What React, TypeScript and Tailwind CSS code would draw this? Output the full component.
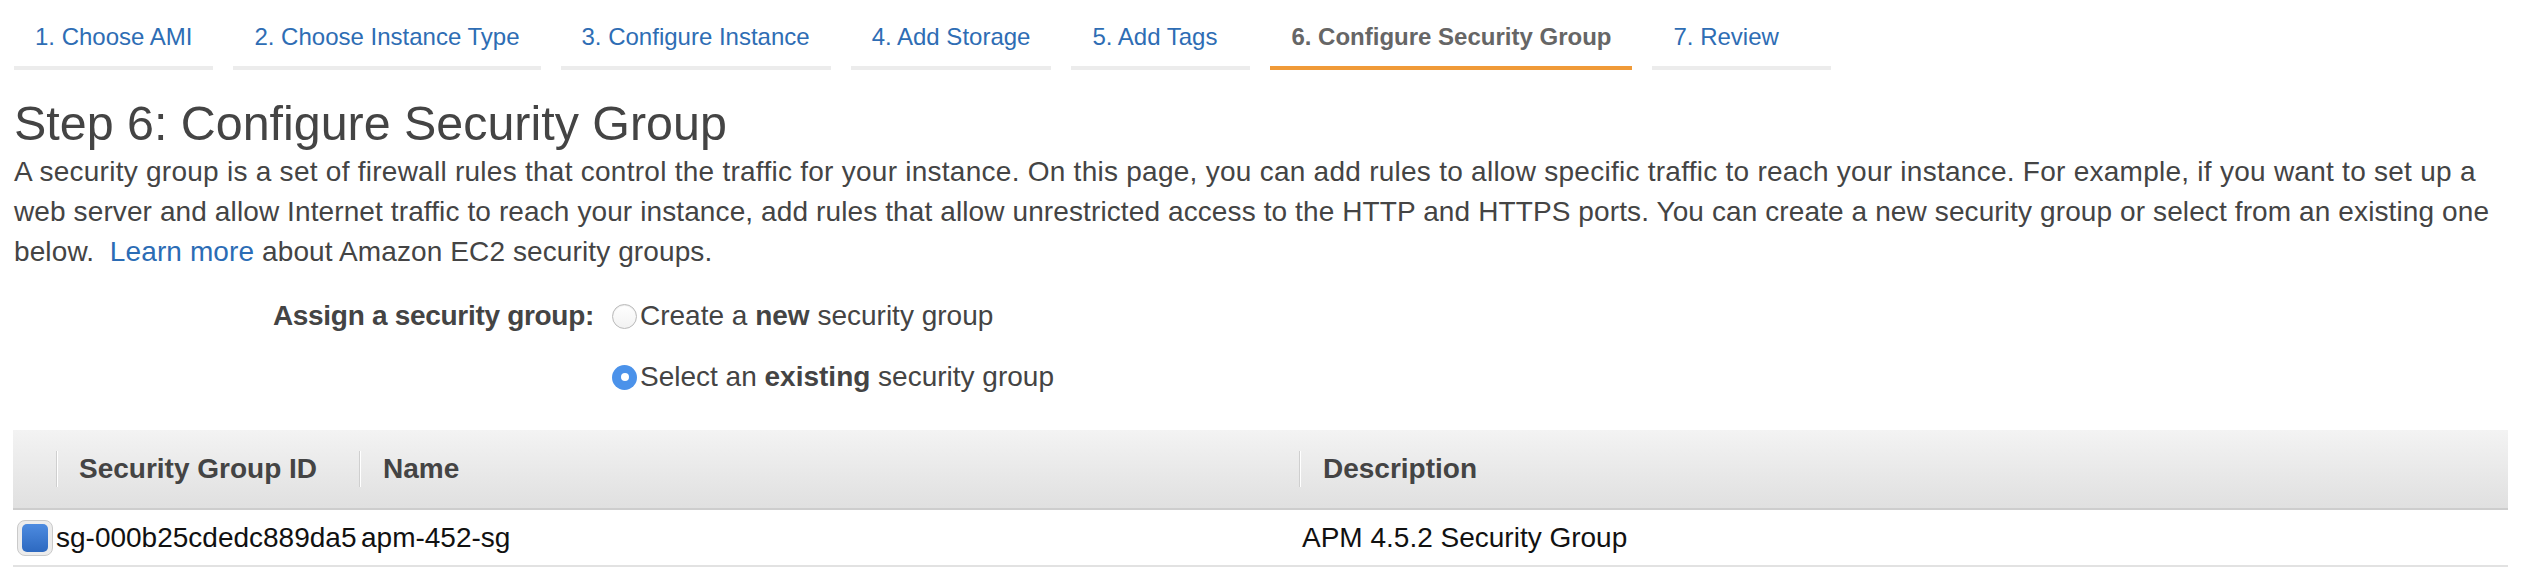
import React from 'react'

const tabs = [
  '1. Choose AMI',
  '2. Choose Instance Type',
  '3. Configure Instance',
  '4. Add Storage',
  '5. Add Tags',
  '6. Configure Security Group',
  '7. Review',
]
const activeTab = 5

function Radio({ checked }: { checked: boolean }) {
  if (checked) {
    return (
      <span className="flex h-[25px] w-[25px] shrink-0 items-center justify-center rounded-full bg-[#4b92ea]">
        <span className="h-[8px] w-[8px] rounded-full bg-white" />
      </span>
    )
  }
  return (
    <span className="h-[25px] w-[25px] shrink-0 rounded-full border border-[#b9b9b9] bg-gradient-to-b from-white to-[#f2f2f2] shadow-[inset_0_1px_1px_rgba(0,0,0,0.08)]" />
  )
}

function HeaderCell({ label, first }: { label: string; first?: boolean }) {
  return (
    <div className="flex h-full items-center">
      <span className="h-[36px] w-[2px] bg-[#cfcfcf] border-r border-white" />
      <span className={first ? 'pl-[21px]' : 'pl-[22px]'}>{label}</span>
    </div>
  )
}

export default function App() {
  return (
    <div
      className="min-h-screen w-full bg-white pl-[14px] pr-[24px] text-[#444]"
      style={{ fontFamily: '"Liberation Sans", Arial, Helvetica, sans-serif' }}
    >
      <div className="flex gap-[20px]">
        {tabs.map((t, i) => (
          <div
            key={t}
            className={
              i === activeTab
                ? 'min-w-[179px] border-b-4 border-[#f09a38] px-[21px] pt-[22px] pb-[14px] text-[24px] leading-[30px] font-bold text-[#666] whitespace-nowrap'
                : 'min-w-[179px] border-b-4 border-[#ececec] px-[21px] pt-[22px] pb-[14px] text-[24px] leading-[30px] text-[#2e6db4] whitespace-nowrap'
            }
          >
            {t}
          </div>
        ))}
      </div>

      <h1 className="mt-[29px] text-[48.4px] leading-[48px] font-normal text-[#444]">
        Step 6: Configure Security Group
      </h1>
      <p className="mt-[5px] text-[28px] leading-[40px] text-[#444] whitespace-nowrap">
        <span className="block tracking-[0.26px]">
          A security group is a set of firewall rules that control the traffic for your instance. On this page, you can add rules to allow specific traffic to reach your instance. For example, if you want to set up a
        </span>
        <span className="block tracking-[0.11px]">
          web server and allow Internet traffic to reach your instance, add rules that allow unrestricted access to the HTTP and HTTPS ports. You can create a new security group or select from an existing one
        </span>
        <span className="block tracking-[0.11px]">
          below.&nbsp; <span className="text-[#2b6cb5]">Learn more</span> about Amazon EC2 security groups.
        </span>
      </p>

      <div className="mt-[24px] flex text-[28px] leading-[40px]">
        <div className="w-[580px] shrink-0 text-right font-bold tracking-[-0.3px] text-[#444]">Assign a security group:</div>
        <div className="ml-[18px] flex flex-col gap-[21px]">
          <label className="flex h-[40px] items-center gap-[3px]">
            <Radio checked={false} />
            <span>
              Create a <b>new</b> security group
            </span>
          </label>
          <label className="flex h-[40px] items-center gap-[3px]">
            <Radio checked />
            <span>
              Select an <b>existing</b> security group
            </span>
          </label>
        </div>
      </div>

      <div className="mt-[33px] -ml-[1px] w-[2495px]">
        <div className="grid h-[80px] grid-cols-[43px_303px_940px_1fr] border-b-2 border-[#cdcdcd] bg-gradient-to-b from-[#f3f3f3] to-[#e0e0e0] text-[28px] font-bold text-[#444]">
          <div />
          <HeaderCell label="Security Group ID" first />
          <HeaderCell label="Name" />
          <HeaderCell label="Description" />
        </div>
        <div className="grid h-[57px] grid-cols-[43px_303px_940px_1fr] items-center border-b-2 border-[#e2e2e2] text-[28px] text-[#111]">
          <div className="flex items-center pl-[4px]">
            <span className="flex h-[36px] w-[36px] items-center justify-center rounded-[8px] border border-[#cacaca] bg-[#ececec]">
              <span className="h-[28px] w-[26px] rounded-[5px] bg-gradient-to-b from-[#4d8be0] to-[#2d69c0]" />
            </span>
          </div>
          <div className="whitespace-nowrap">sg-000b25cdedc889da5</div>
          <div className="pl-[2px] whitespace-nowrap">apm-452-sg</div>
          <div className="pl-[3px] whitespace-nowrap">APM 4.5.2 Security Group</div>
        </div>
      </div>
    </div>
  )
}
